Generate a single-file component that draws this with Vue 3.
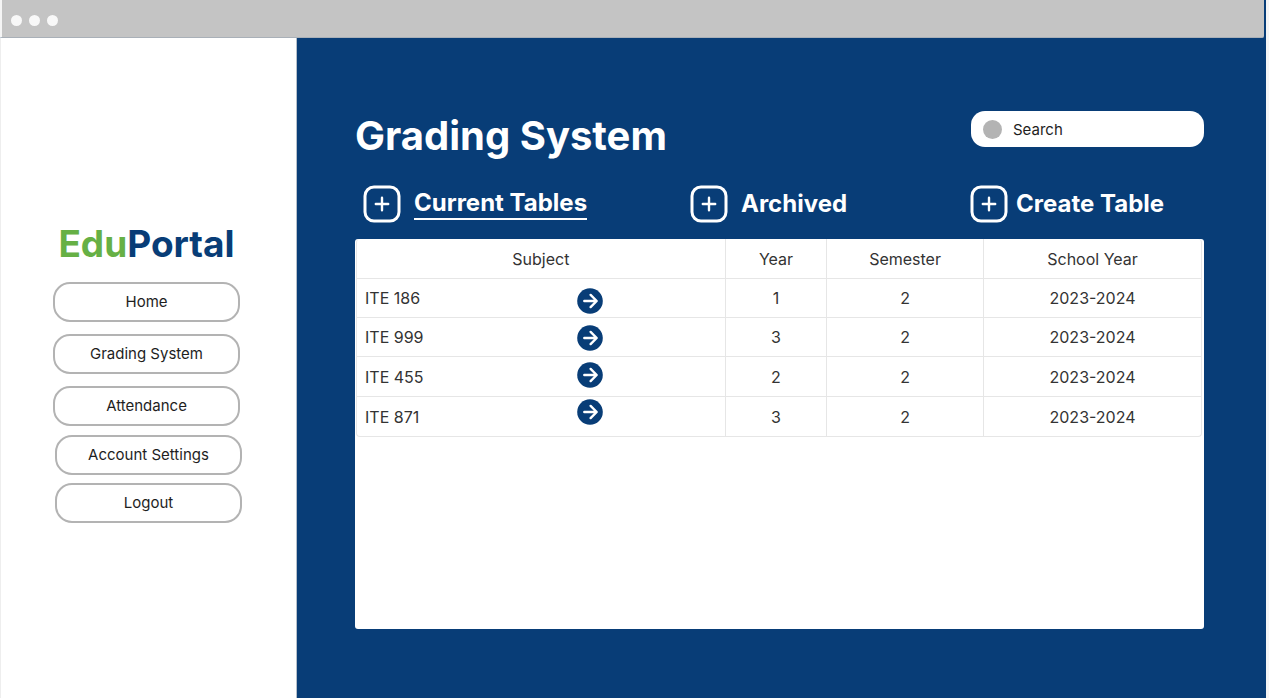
<script setup>
import { ref } from 'vue'

const search = ref('')

const mainNav = ['Home', 'Grading System', 'Attendance']
const accountNav = ['Account Settings', 'Logout']

const actions = [
  { label: 'Current Tables', active: true },
  { label: 'Archived' },
  { label: 'Create Table', create: true },
]

const rows = [
  { subject: 'ITE 186', year: 1, semester: 2, schoolYear: '2023-2024' },
  { subject: 'ITE 999', year: 3, semester: 2, schoolYear: '2023-2024' },
  { subject: 'ITE 455', year: 2, semester: 2, schoolYear: '2023-2024' },
  { subject: 'ITE 871', year: 3, semester: 2, schoolYear: '2023-2024' },
]
</script>

<template>
  <div class="window">
    <header class="titlebar">
      <span class="dot"></span>
      <span class="dot"></span>
      <span class="dot"></span>
    </header>

    <div class="body">
      <aside class="sidebar">
        <div class="logo"><span class="logo-edu">Edu</span>Portal</div>
        <nav class="nav">
          <button v-for="item in mainNav" :key="item" type="button" class="nav-button">{{ item }}</button>
        </nav>
        <nav class="nav nav-account">
          <button v-for="item in accountNav" :key="item" type="button" class="nav-button">{{ item }}</button>
        </nav>
      </aside>

      <main class="main">
        <div class="heading">
          <h1 class="title">Grading System</h1>
          <label class="search">
            <span class="search-dot"></span>
            <input v-model="search" type="text" class="search-input" placeholder="Search" aria-label="Search" />
          </label>
        </div>

        <div class="actions">
          <button
            v-for="action in actions"
            :key="action.label"
            type="button"
            class="action"
            :class="{ active: action.active, create: action.create }"
          >
            <svg class="action-icon" viewBox="0 0 38 38" aria-hidden="true">
              <rect x="2" y="2" width="34" height="34" rx="9" />
              <path d="M19 12.8v12.4M12.8 19h12.4" />
            </svg>
            <span class="action-label">{{ action.label }}</span>
          </button>
        </div>

        <section class="panel">
          <table class="table">
            <colgroup>
              <col class="col-subject" />
              <col class="col-year" />
              <col class="col-semester" />
              <col class="col-school" />
            </colgroup>
            <thead>
              <tr>
                <th>Subject</th>
                <th>Year</th>
                <th>Semester</th>
                <th>School Year</th>
              </tr>
            </thead>
            <tbody>
              <tr v-for="row in rows" :key="row.subject">
                <td class="subject">{{ row.subject }}</td>
                <td>{{ row.year }}</td>
                <td>{{ row.semester }}</td>
                <td>{{ row.schoolYear }}</td>
              </tr>
            </tbody>
          </table>
          <div class="open-column">
            <button v-for="row in rows" :key="row.subject" type="button" class="open" :aria-label="'Open ' + row.subject">
              <svg viewBox="0 0 26 26" aria-hidden="true">
                <circle cx="13" cy="13" r="12.8" />
                <path d="M7.3 13h12M13.6 6.9l6.1 6.1-6.1 6.1" />
              </svg>
            </button>
          </div>
        </section>
      </main>
    </div>
  </div>
</template>

<style>
body {
  margin: 0;
  background: #f5f5f5;
}
</style>

<style scoped>
.window {
  box-sizing: border-box;
  display: flex;
  flex-direction: column;
  min-height: 100vh;
  margin-right: 3px;
  background: #083d77;
  font-family: Inter, "Liberation Sans", sans-serif;
  font-size: 16px;
}

button {
  margin: 0;
  padding: 0;
  border: 0;
  background: none;
  font: inherit;
  cursor: pointer;
}

.titlebar {
  box-sizing: border-box;
  display: flex;
  align-items: center;
  gap: 7px;
  height: 38px;
  margin-right: 2px;
  padding: 3px 0 0 9px;
  border-left: 2px solid #f5f5f5;
  border-bottom: 1px solid #a9b0b8;
  border-radius: 0 0 2px 0;
  background: #c4c4c4;
}

.dot {
  width: 11px;
  height: 11px;
  border-radius: 50%;
  background: #f8f8f8;
}

.body {
  display: flex;
  flex: 1;
}

.sidebar {
  box-sizing: border-box;
  flex: 0 0 297px;
  padding: 182px 56px 0 52px;
  border-left: 1px solid #eeeeee;
  border-right: 1px solid #b5bfca;
  background: #ffffff;
}

.logo {
  margin-bottom: 14px;
  color: #083d77;
  font-size: 37px;
  font-weight: 700;
  line-height: 48px;
  text-align: center;
}

.logo-edu {
  color: #66b045;
}

.nav {
  display: flex;
  flex-direction: column;
  gap: 12px;
}

.nav-account {
  gap: 8px;
  margin: 9px -2px 0 2px;
}

.nav-button {
  height: 40px;
  border: 2px solid #b3b3b3;
  border-radius: 17px;
  background: #ffffff;
  color: #1e1e1e;
  font-size: 15px;
  line-height: 18px;
}

.main {
  flex: 1;
  padding: 73px 62px 69px 58px;
}

.heading {
  display: flex;
  align-items: flex-start;
  justify-content: space-between;
}

.title {
  margin: 0;
  color: #ffffff;
  font-size: 40px;
  font-weight: 700;
  line-height: 50px;
}

.search {
  box-sizing: border-box;
  display: flex;
  align-items: center;
  gap: 11px;
  width: 233px;
  height: 36px;
  padding: 0 12px;
  border-radius: 14px;
  background: #ffffff;
}

.search-dot {
  flex: none;
  width: 19px;
  height: 19px;
  border-radius: 50%;
  background: #b3b3b3;
}

.search-input {
  flex: 1;
  min-width: 0;
  padding: 0;
  border: 0;
  outline: 0;
  background: none;
  color: #1e1e1e;
  font: inherit;
  font-size: 15px;
}

.search-input::placeholder {
  color: #1e1e1e;
  opacity: 1;
}

.actions {
  display: grid;
  grid-template-columns: 327fr 280fr 234fr;
  margin: 24px 0 16px;
  padding-left: 8px;
}

.action {
  display: flex;
  align-items: center;
  gap: 13px;
  color: #ffffff;
  font-size: 24px;
  font-weight: 700;
  line-height: 30px;
  white-space: nowrap;
}

.action.create {
  gap: 8px;
}

.action-icon {
  width: 38px;
  height: 38px;
  fill: none;
  stroke: #ffffff;
  stroke-width: 3;
  stroke-linecap: round;
}

.action-icon path {
  stroke-width: 2.4;
}

.action.active .action-label {
  border-bottom: 2px solid #ffffff;
}

.panel {
  position: relative;
  min-height: 390px;
  border-radius: 3px;
  background: #ffffff;
}

.table {
  width: calc(100% - 3px);
  margin-left: 1px;
  border: 1px solid #e6e6e6;
  border-top: 0;
  border-radius: 4px;
  border-collapse: separate;
  border-spacing: 0;
  table-layout: fixed;
  color: #333333;
  line-height: 20px;
}

.col-subject {
  width: 43.7%;
}

.col-year {
  width: 12%;
}

.col-semester {
  width: 18.6%;
}

.table th,
.table td {
  height: 39px;
  padding: 0;
  border-right: 1px solid #e6e6e6;
  border-bottom: 1px solid #e6e6e6;
  box-sizing: border-box;
  font-weight: 400;
  text-align: center;
}

.table th,
.table tr:nth-child(3) td {
  height: 40px;
}

.table th:last-child,
.table td:last-child {
  border-right: 0;
}

.table tr:last-child td {
  border-bottom: 0;
}

.table .subject {
  padding-left: 8px;
  text-align: left;
}

.open-column {
  position: absolute;
  top: 49px;
  left: 222px;
  display: flex;
  flex-direction: column;
  gap: 11px;
}

.open {
  width: 26px;
  height: 26px;
}

.open svg {
  display: block;
  fill: #083d77;
}

.open path {
  fill: none;
  stroke: #ffffff;
  stroke-width: 2.4;
  stroke-linecap: round;
  stroke-linejoin: round;
}
</style>
